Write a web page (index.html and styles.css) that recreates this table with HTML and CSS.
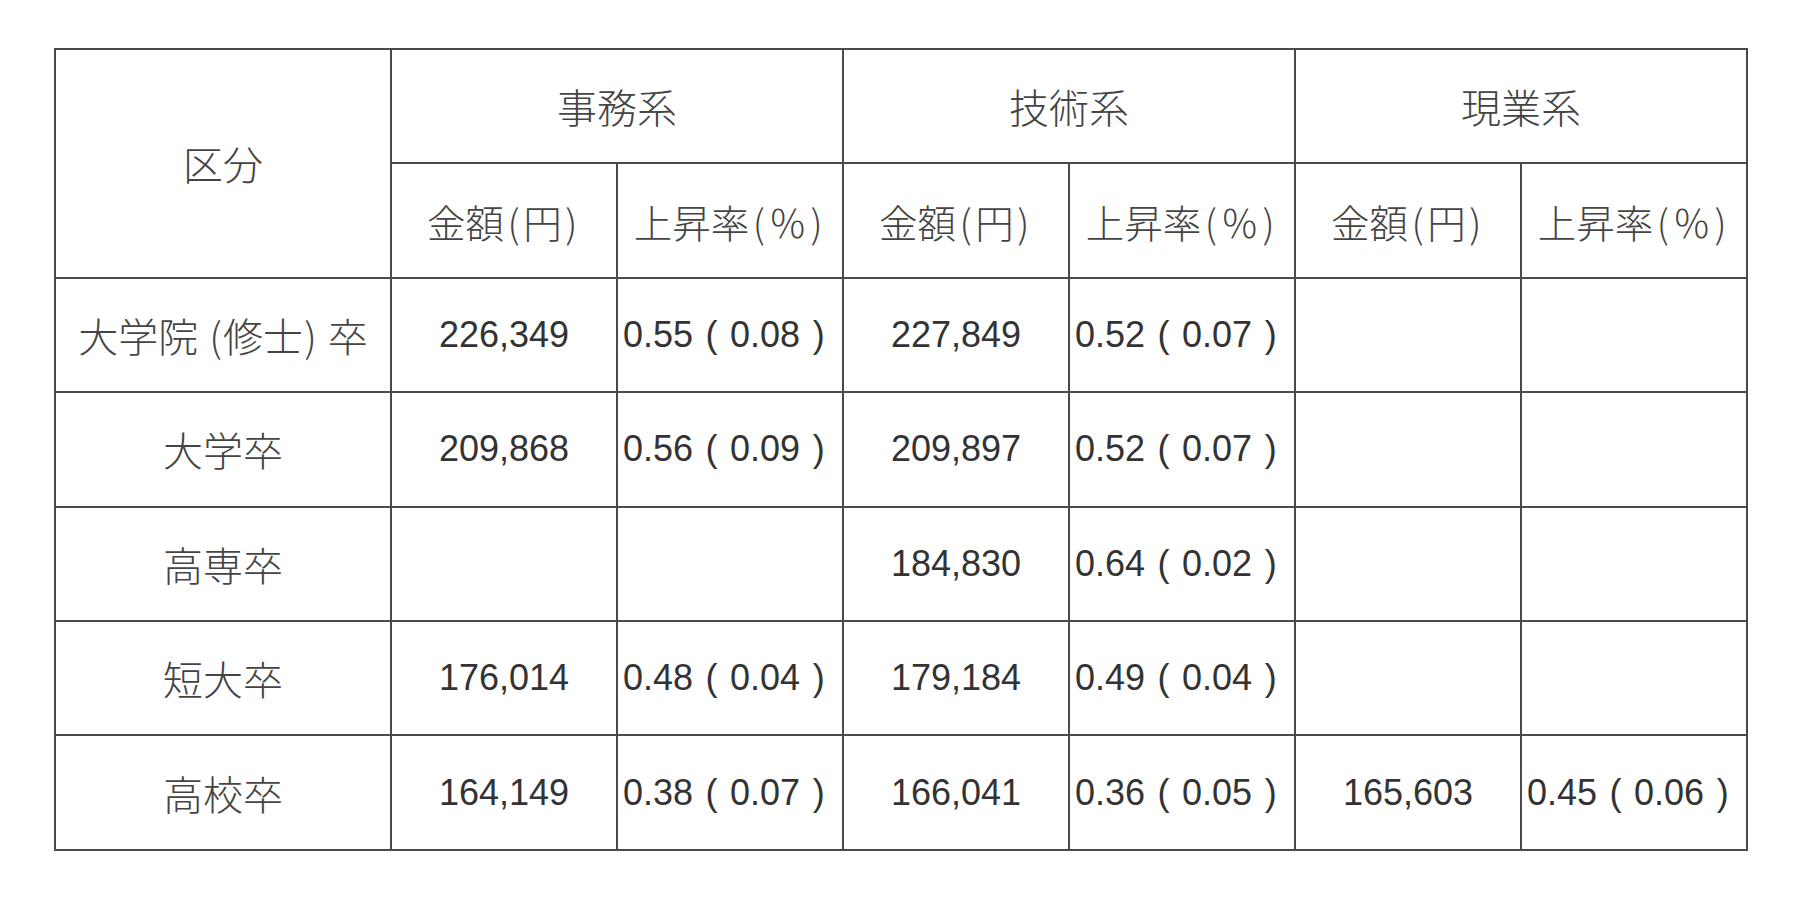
FILE: index.html
```html
<!DOCTYPE html>
<html lang="ja">
<head>
<meta charset="utf-8">
<title>初任給</title>
<link rel="stylesheet" href="styles.css">
</head>
<body>
<table class="pay">
  <colgroup>
    <col class="c-label">
    <col class="c-val"><col class="c-val"><col class="c-val"><col class="c-val"><col class="c-val"><col class="c-val">
  </colgroup>
  <tr>
    <th class="jp" rowspan="2">区分</th>
    <th class="jp" colspan="2">事務系</th>
    <th class="jp" colspan="2">技術系</th>
    <th class="jp" colspan="2">現業系</th>
  </tr>
  <tr>
    <th class="jp sub">金額<span class="hp">(</span>円<span class="hp">)</span></th><th class="jp sub">上昇率<span class="hp">(</span>％<span class="hp">)</span></th>
    <th class="jp sub">金額<span class="hp">(</span>円<span class="hp">)</span></th><th class="jp sub">上昇率<span class="hp">(</span>％<span class="hp">)</span></th>
    <th class="jp sub">金額<span class="hp">(</span>円<span class="hp">)</span></th><th class="jp sub">上昇率<span class="hp">(</span>％<span class="hp">)</span></th>
  </tr>
  <tr>
    <td class="jp">大学院<span class="fp-open">(</span>修士<span class="fp-close">)</span>卒</td>
    <td class="amt">226,349</td><td class="rate">0.55 ( 0.08 )</td>
    <td class="amt">227,849</td><td class="rate">0.52 ( 0.07 )</td>
    <td class="amt"></td><td class="rate"></td>
  </tr>
  <tr>
    <td class="jp">大学卒</td>
    <td class="amt">209,868</td><td class="rate">0.56 ( 0.09 )</td>
    <td class="amt">209,897</td><td class="rate">0.52 ( 0.07 )</td>
    <td class="amt"></td><td class="rate"></td>
  </tr>
  <tr>
    <td class="jp">高専卒</td>
    <td class="amt"></td><td class="rate"></td>
    <td class="amt">184,830</td><td class="rate">0.64 ( 0.02 )</td>
    <td class="amt"></td><td class="rate"></td>
  </tr>
  <tr>
    <td class="jp">短大卒</td>
    <td class="amt">176,014</td><td class="rate">0.48 ( 0.04 )</td>
    <td class="amt">179,184</td><td class="rate">0.49 ( 0.04 )</td>
    <td class="amt"></td><td class="rate"></td>
  </tr>
  <tr>
    <td class="jp">高校卒</td>
    <td class="amt">164,149</td><td class="rate">0.38 ( 0.07 )</td>
    <td class="amt">166,041</td><td class="rate">0.36 ( 0.05 )</td>
    <td class="amt">165,603</td><td class="rate">0.45 ( 0.06 )</td>
  </tr>
</table>
</body>
</html>
```
FILE: styles.css
```css
html, body {
  margin: 0;
  padding: 0;
  background: #ffffff;
}

body {
  padding: 48px 0 0 54px;
  color: #333333;
}

.pay {
  border-collapse: collapse;
  table-layout: fixed;
  width: 1692px;
}

.c-label { width: 336px; }
.c-val { width: 226px; }

.pay tr {
  height: 114.4px;
}

.pay th,
.pay td {
  border: 2px solid #4a4a4a;
  padding: 0;
  vertical-align: middle;
  white-space: nowrap;
}

.jp {
  font-family: "Noto Sans CJK JP", sans-serif;
  font-weight: 300;
  font-size: 40px;
  text-align: center;
  color: #444444;
}

.jp.sub {
  font-size: 38.5px;
}

.hp {
  display: inline-block;
  width: 0.5em;
  text-align: center;
}

.fp-open,
.fp-close {
  display: inline-block;
  width: 0.62em;
  box-sizing: border-box;
}

.fp-open {
  text-align: right;
  padding-right: 0.03em;
}

.fp-close {
  text-align: left;
  padding-left: 0.03em;
}

.amt {
  font-family: "Liberation Sans", Arial, sans-serif;
  font-size: 36px;
  text-align: center;
  color: #333333;
}

.pay .rate {
  font-family: "Liberation Sans", Arial, sans-serif;
  font-size: 36px;
  text-align: left;
  padding-left: 5px;
  word-spacing: 2.5px;
  color: #333333;
}
```
